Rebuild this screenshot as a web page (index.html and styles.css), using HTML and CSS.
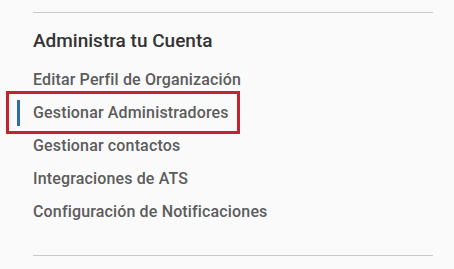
FILE: index.html
```html
<!DOCTYPE html>
<html lang="es">
<head>
<meta charset="utf-8">
<link rel="stylesheet" href="styles.css">
</head>
<body>
<div class="panel">
  <div class="rule"></div>
  <h2 class="title">Administra tu Cuenta</h2>
  <ul class="menu">
    <li class="item">Editar Perfil de Organización</li>
    <li class="item active"><span class="mark"></span>Gestionar Administradores</li>
    <li class="item">Gestionar contactos</li>
    <li class="item">Integraciones de ATS</li>
    <li class="item">Configuración de Notificaciones</li>
  </ul>
  <div class="rule bottom"></div>
</div>
</body>
</html>
```
FILE: styles.css
```css
html, body {
  margin: 0;
  padding: 0;
  background: #fafafa;
}
body {
  width: 454px;
  height: 269px;
  overflow: hidden;
  font-family: Roboto, "Liberation Sans", sans-serif;
}
.panel {
  padding: 12px 21px 0 33px;
}
.rule {
  height: 1px;
  background: #c9c9c9;
}
.title {
  margin: 16px 0 0;
  font-size: 19px;
  line-height: 24px;
  font-weight: 500;
  color: #333;
}
.menu {
  list-style: none;
  margin: 10px 0 0;
  padding: 0;
}
.item {
  position: relative;
  font-size: 16px;
  line-height: 33px;
  font-weight: 500;
  letter-spacing: 0.15px;
  color: #5c5c5c;
}
.item.active::before {
  content: "";
  position: absolute;
  left: -16px;
  top: 4px;
  width: 3px;
  height: 26px;
  background: #2c6ea5;
}
.mark {
  position: absolute;
  left: -27px;
  top: -5px;
  width: 234px;
  height: 43px;
  box-sizing: border-box;
  border: 3px solid #c3232b;
}
.bottom {
  margin-top: 27px;
}
```
